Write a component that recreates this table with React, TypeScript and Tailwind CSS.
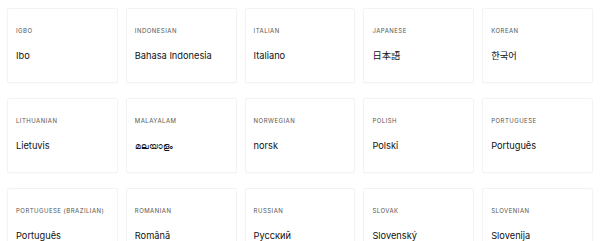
const languages = [
  { label: 'Igbo', name: 'Ibo' },
  { label: 'Indonesian', name: 'Bahasa Indonesia' },
  { label: 'Italian', name: 'Italiano' },
  { label: 'Japanese', name: '日本語' },
  { label: 'Korean', name: '한국어' },
  { label: 'Lithuanian', name: 'Lietuvis' },
  { label: 'Malayalam', name: 'മലയാളം' },
  { label: 'Norwegian', name: 'norsk' },
  { label: 'Polish', name: 'Polski' },
  { label: 'Portuguese', name: 'Português' },
  { label: 'Portuguese (Brazilian)', name: 'Português' },
  { label: 'Romanian', name: 'Română' },
  { label: 'Russian', name: 'Русский' },
  { label: 'Slovak', name: 'Slovenský' },
  { label: 'Slovenian', name: 'Slovenija' },
];

export default function App() {
  return (
    <main className="h-[241px] w-[600px] overflow-hidden bg-white px-[7px] pt-[8px] font-['Inter','Noto_Sans','Noto_Sans_CJK_JP',sans-serif] text-[#111]">
      <div className="grid grid-cols-5 gap-x-2 gap-y-[15px]">
        {languages.map((lang) => (
          <div key={lang.label} className="h-[75px] rounded-[2px] border border-[#f3f3f3] px-2 pt-[18px] shadow-[0_1px_2px_rgba(0,0,0,0.025)]">
            <div className="text-[6px] leading-[8px] tracking-[0.08em] text-[#555] uppercase">{lang.label}</div>
            <div className="mt-[14px] text-[9.25px] leading-[14px]">
              {lang.label === 'Slovenian' ? (
                <>
                  <span className="underline decoration-[#f3c623] decoration-2 underline-offset-[3px]">Slov</span>enija
                </>
              ) : (
                lang.name
              )}
            </div>
          </div>
        ))}
      </div>
    </main>
  );
}
